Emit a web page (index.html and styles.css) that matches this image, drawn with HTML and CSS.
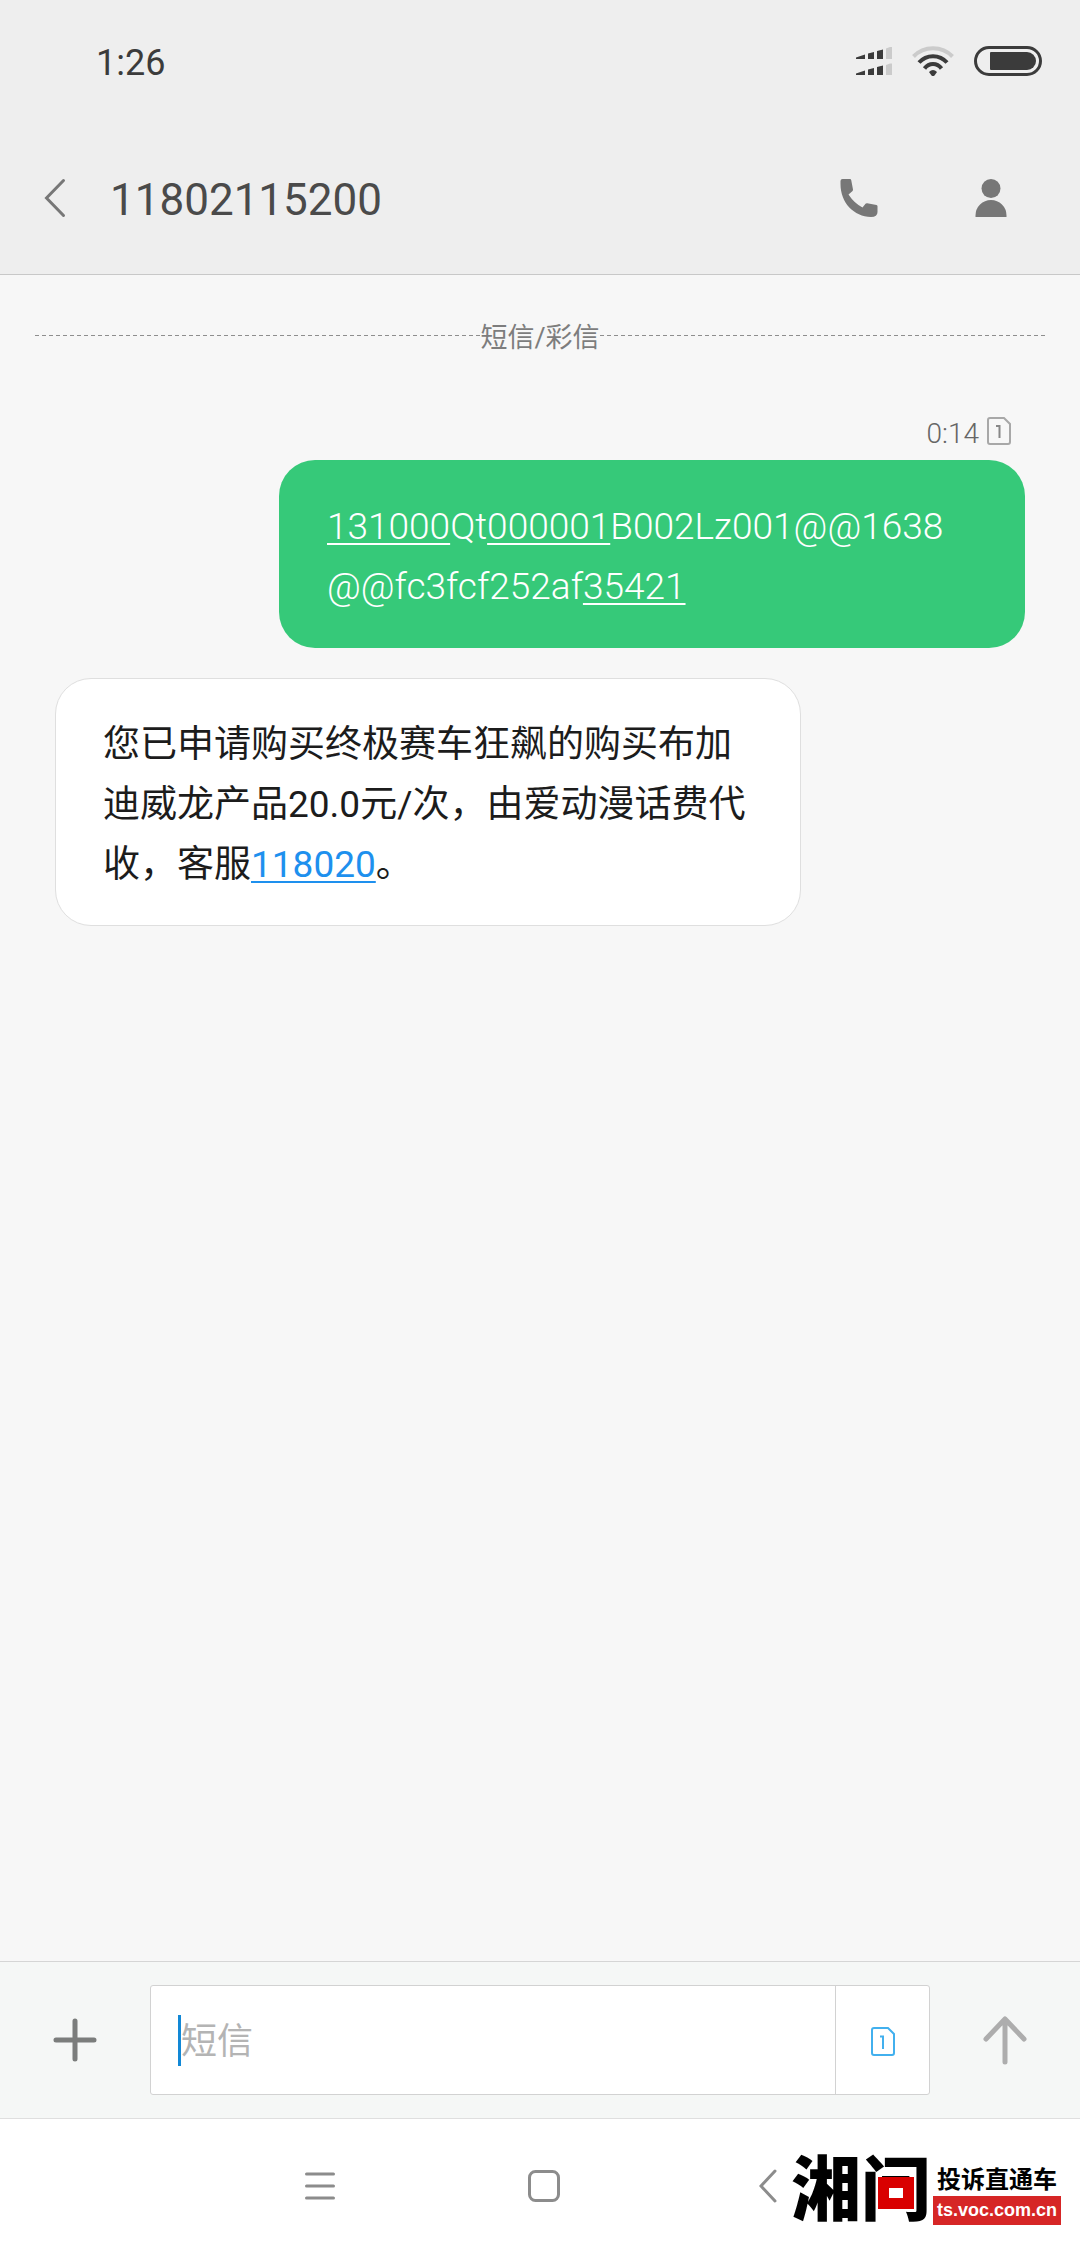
FILE: index.html
```html
<!DOCTYPE html>
<html lang="zh-CN">
<head>
<meta charset="utf-8" />
<meta name="viewport" content="width=device-width, initial-scale=1.0" />
<meta name="format-detection" content="telephone=no" />
<title>11802115200</title>
<link rel="stylesheet" href="styles.css">
</head>
<body>
	<header class="header">
		<div class="statusbar">
			<span class="clock">1:26</span>
			<div class="status-icons">
				<svg width="36" height="28" viewBox="0 0 36 28" fill="#3b3b3b">
					<path d="M0 10.5L9 7.5V12H0zM12 6.5L18 5V12H12zM21 4L27 2.5V12H21z" />
					<path d="M0 26.5L9 23.5V28H0zM12 22.5L18 21V28H12zM21 20L27 18.500V28H21z" />
					<path fill="#cbcbcb" d="M30 1.500L34 0H36V12H30zM30 18L34 16.500H36V28H30z" />
				</svg>
				<svg width="42" height="30" viewBox="0 0 42 30" fill="none" stroke="#3b3b3b" stroke-width="4">
					<path stroke="#cbcbcb" d="M1.500 10.500C12-.5 30-.5 40.500 10.500" />
					<path d="M7 16.500C14.500 8 27.500 8 35 16.500" />
					<path d="M12.500 22.500C17 16.500 25 16.500 29.500 22.500" />
					<path fill="#3b3b3b" stroke="none" d="M17 26Q21 22 25 26L22.500 29.500Q21 30.500 19.500 29.500z" />
				</svg>
				<svg width="68" height="30" viewBox="0 0 68 30">
					<rect x="1.500" y="1.500" width="65" height="27" rx="13.500" fill="none" stroke="#3b3b3b" stroke-width="3" />
					<path fill="#3b3b3b" d="M17 6H53A9 9 0 0 1 53 24H17Q16 24 16 23V7Q16 6 17 6z" />
				</svg>
			</div>
		</div>
		<div class="titlebar">
			<button class="icon-btn back" type="button" aria-label="返回">
				<svg width="22" height="40" viewBox="0 0 22 40" fill="none" stroke="#777777" stroke-width="3" stroke-linecap="round">
					<path d="M19.500 2.500L2.500 20L19.500 37.500" />
				</svg>
			</button>
			<h1 class="title">11802115200</h1>
			<button class="icon-btn" type="button" aria-label="拨打电话">
				<svg width="38" height="38" viewBox="0 0 38 38" fill="#777777">
					<path d="M2.500 0H10Q11 0 11.200 1L13 10.500Q13.100 11.500 12.300 12.200L8.500 15.500Q14 24 22.500 28.500L25.500 24.700Q26.200 24 27.200 24.200L36.500 26Q37.500 26.200 37.500 27.200V33Q37.500 38 31 38C14 37.500 .5 24 .5 5V2Q.5 0 2.500 0z" />
				</svg>
			</button>
			<button class="icon-btn" type="button" aria-label="联系人">
				<svg width="32" height="38" viewBox="0 0 32 38" fill="#777777">
					<circle cx="16" cy="9.500" r="9.500" />
					<path d="M.5 38V36.500A15.500 15.500 0 0 1 31.500 36.500V38z" />
				</svg>
			</button>
		</div>
	</header>

	<main class="thread">
		<div class="divider"><span>短信/彩信</span></div>
		<div class="meta">
			<span>0:14</span>
			<svg width="24" height="28" viewBox="0 0 24 28" fill="none" stroke="#a8a8a8" stroke-width="2">
				<path d="M3 1H17L23 7V25Q23 27 21 27H3Q1 27 1 25V3Q1 1 3 1z" />
				<path stroke="#888888" d="M9 9H12.500V21" />
			</svg>
		</div>
		<p class="bubble sent"><a href="tel:131000">131000</a>Qt<a href="tel:000001">000001</a>B002Lz001@@1638<br>@@fc3fcf252af<a href="tel:35421">35421</a></p>
		<p class="bubble received">您已申请购买终极赛车狂飙的购买布加<br>迪威龙产品20.0元/次，由爱动漫话费代<br>收，客服<a href="tel:118020">118020</a>。</p>
	</main>

	<form class="composer">
		<button class="icon-btn add" type="button" aria-label="添加">
			<svg width="44" height="44" viewBox="0 0 44 44" fill="none" stroke="#7b7d7c" stroke-width="5" stroke-linecap="round">
				<path d="M3 22H41M22 3V41" />
			</svg>
		</button>
		<div class="field">
			<span class="caret"></span>
			<input class="input" type="text" placeholder="短信" aria-label="短信">
			<button class="icon-btn sim" type="button" aria-label="卡1">
				<svg width="24" height="29" viewBox="0 0 24 29" fill="none" stroke="#42b0ee" stroke-width="2">
					<path d="M3 1H17L23 7V26Q23 28 21 28H3Q1 28 1 26V3Q1 1 3 1z" />
					<path d="M9 9.500H12V22" />
				</svg>
			</button>
		</div>
		<button class="icon-btn send" type="submit" aria-label="发送">
			<svg width="44" height="50" viewBox="0 0 44 50" fill="none" stroke="#adadad" stroke-width="5" stroke-linecap="round" stroke-linejoin="round">
				<path d="M3 24L22 4L41 24M22 4V47" />
			</svg>
		</button>
	</form>

	<nav class="navbar">
		<button class="icon-btn" type="button" aria-label="菜单">
			<svg width="32" height="32" viewBox="0 0 32 32" fill="none" stroke="#8c8c8c" stroke-width="3" stroke-linecap="round">
				<path d="M2.500 4H29.500M2.500 16H29.500M2.500 28H29.500" />
			</svg>
		</button>
		<button class="icon-btn" type="button" aria-label="主屏幕">
			<svg width="32" height="32" viewBox="0 0 32 32" fill="none" stroke="#8c8c8c" stroke-width="3">
				<rect x="1.500" y="1.500" width="29" height="29" rx="6" />
			</svg>
		</button>
		<button class="icon-btn" type="button" aria-label="返回">
			<svg width="18" height="34" viewBox="0 0 18 34" fill="none" stroke="#8c8c8c" stroke-width="3" stroke-linecap="round">
				<path d="M16 2L2 17L16 32" />
			</svg>
		</button>
		<a class="watermark" href="#">
			<span class="brand">湘<span class="brand-ask">问</span></span>
			<span class="brand-side">
				<span class="brand-name">投诉直通车</span>
				<span class="brand-url">ts.voc.com.cn</span>
			</span>
		</a>
	</nav>
</body>
</html>
```

FILE: styles.css
```css
* {
	box-sizing: border-box;
}

body {
	display: flex;
	flex-direction: column;
	min-height: 100vh;
	margin: 0;
	background-color: #F7F7F7;
	font-family: Roboto, "Noto Sans CJK SC", sans-serif;
}

svg {
	display: block;
	flex: none;
}

.icon-btn {
	display: flex;
	align-items: center;
	justify-content: center;
	padding: 0;
	border: none;
	background: none;
	cursor: pointer;
}

/* header */
.header {
	background-color: #EEEEEE;
	border-bottom: 1px solid #C8C8C8;
}

.statusbar {
	display: flex;
	align-items: center;
	justify-content: space-between;
	height: 122px;
	padding: 0 38px 0 96px;
}

.clock {
	padding-top: 4px;
	font-size: 36px;
	color: #3B3B3B;
}

.status-icons {
	display: flex;
	align-items: center;
	gap: 20px;
}

.titlebar {
	display: flex;
	align-items: center;
	height: 152px;
	padding-right: 23px;
}

.titlebar .icon-btn {
	width: 132px;
	height: 100px;
}

.titlebar .back {
	width: 110px;
}

.title {
	flex: 1;
	margin: 0;
	padding-top: 4px;
	font-size: 44px;
	font-weight: 400;
	color: #4A4A4A;
}

/* messages */
.thread {
	display: flex;
	flex: 1;
	flex-direction: column;
	padding: 40px 55px;
}

.divider {
	display: flex;
	align-items: center;
	margin: 0 -20px;
	font-size: 27px;
	line-height: 40px;
	color: #7D7D7D;
}

.divider span {
	padding-top: 3px;
	margin-bottom: -3px;
}

.divider::before,
.divider::after {
	content: "";
	flex: 1;
	height: 1px;
	background: repeating-linear-gradient(to right, #8E8E8E 0 4px, transparent 4px 7px);
}

.meta {
	display: flex;
	align-items: center;
	justify-content: flex-end;
	gap: 8px;
	margin-top: 56px;
	padding-right: 14px;
	font-size: 28px;
	font-weight: 300;
	line-height: 40px;
	color: #666666;
}

.meta span {
	padding-top: 3px;
	margin-bottom: -3px;
}

.bubble {
	width: 746px;
	max-width: 90%;
	margin: 0;
	padding: 37px 0 31px 48px;
	border-radius: 36px;
	font-size: 37px;
	line-height: 60px;
}

.sent {
	align-self: flex-end;
	margin: 9px 0 30px;
	background-color: #36C979;
	color: #FFFFFF;
	font-weight: 300;
}

.received {
	padding: 36px 0 30px 47px;
	border: 1px solid #DFDFDF;
	background-color: #FFFFFF;
	color: #1C1C1C;
}

.bubble a {
	color: inherit;
	text-decoration-thickness: 2px;
	text-underline-offset: 4px;
}

.received a {
	color: #1E90EE;
}

/* input bar */
.composer {
	display: flex;
	align-items: center;
	padding: 23px 0;
	border-top: 1px solid #D5D5D5;
	border-bottom: 1px solid #DFDFDF;
	background-color: #F5F7F6;
}

.add,
.send {
	width: 150px;
	height: 110px;
}

.field {
	display: flex;
	flex: 1;
	align-items: center;
	height: 110px;
	padding-left: 27px;
	border: 1px solid #D2D2D2;
	border-radius: 3px;
	background-color: #FFFFFF;
}

.caret {
	width: 3px;
	height: 51px;
	background-color: #1288D6;
}

.input {
	flex: 1;
	min-width: 0;
	height: 100%;
	padding: 3px 0 0;
	border: none;
	outline: none;
	background: none;
	font-family: inherit;
	font-size: 36px;
}

.input::placeholder {
	color: #B4B4B4;
}

.sim {
	align-self: stretch;
	width: 94px;
	padding-top: 3px;
	border-left: 1px solid #D2D2D2;
}

/* system navigation */
.navbar {
	position: relative;
	display: flex;
	align-items: center;
	justify-content: center;
	gap: 82px;
	height: 129px;
	padding: 4px 0 0 8px;
	background-color: #FFFFFF;
}

.navbar .icon-btn {
	width: 142px;
	height: 100px;
}

.watermark {
	position: absolute;
	right: 19px;
	bottom: 23px;
	display: flex;
	align-items: flex-end;
	gap: 2px;
	color: #000000;
	text-decoration: none;
}

.brand {
	font-family: "Noto Sans CJK SC", sans-serif;
	font-size: 70px;
	font-weight: 900;
	line-height: 80px;
}

.brand-ask {
	position: relative;
}

/* red block inside the second character */
.brand-ask::after {
	content: "";
	position: absolute;
	bottom: 26px;
	left: 17px;
	box-sizing: border-box;
	width: 36px;
	height: 32px;
	border: 11px solid #D90000;
	background-color: #FFFFFF;
}

.brand-side {
	display: flex;
	flex-direction: column;
	gap: 2px;
}

.brand-name {
	font-size: 24px;
	font-weight: 700;
	line-height: 28px;
	text-align: center;
}

.brand-url {
	padding: 0 4px;
	background-color: #D62626;
	color: #FFFFFF;
	font-family: "Liberation Sans", Arial, sans-serif;
	font-size: 18px;
	font-weight: 700;
	line-height: 29px;
}
```
